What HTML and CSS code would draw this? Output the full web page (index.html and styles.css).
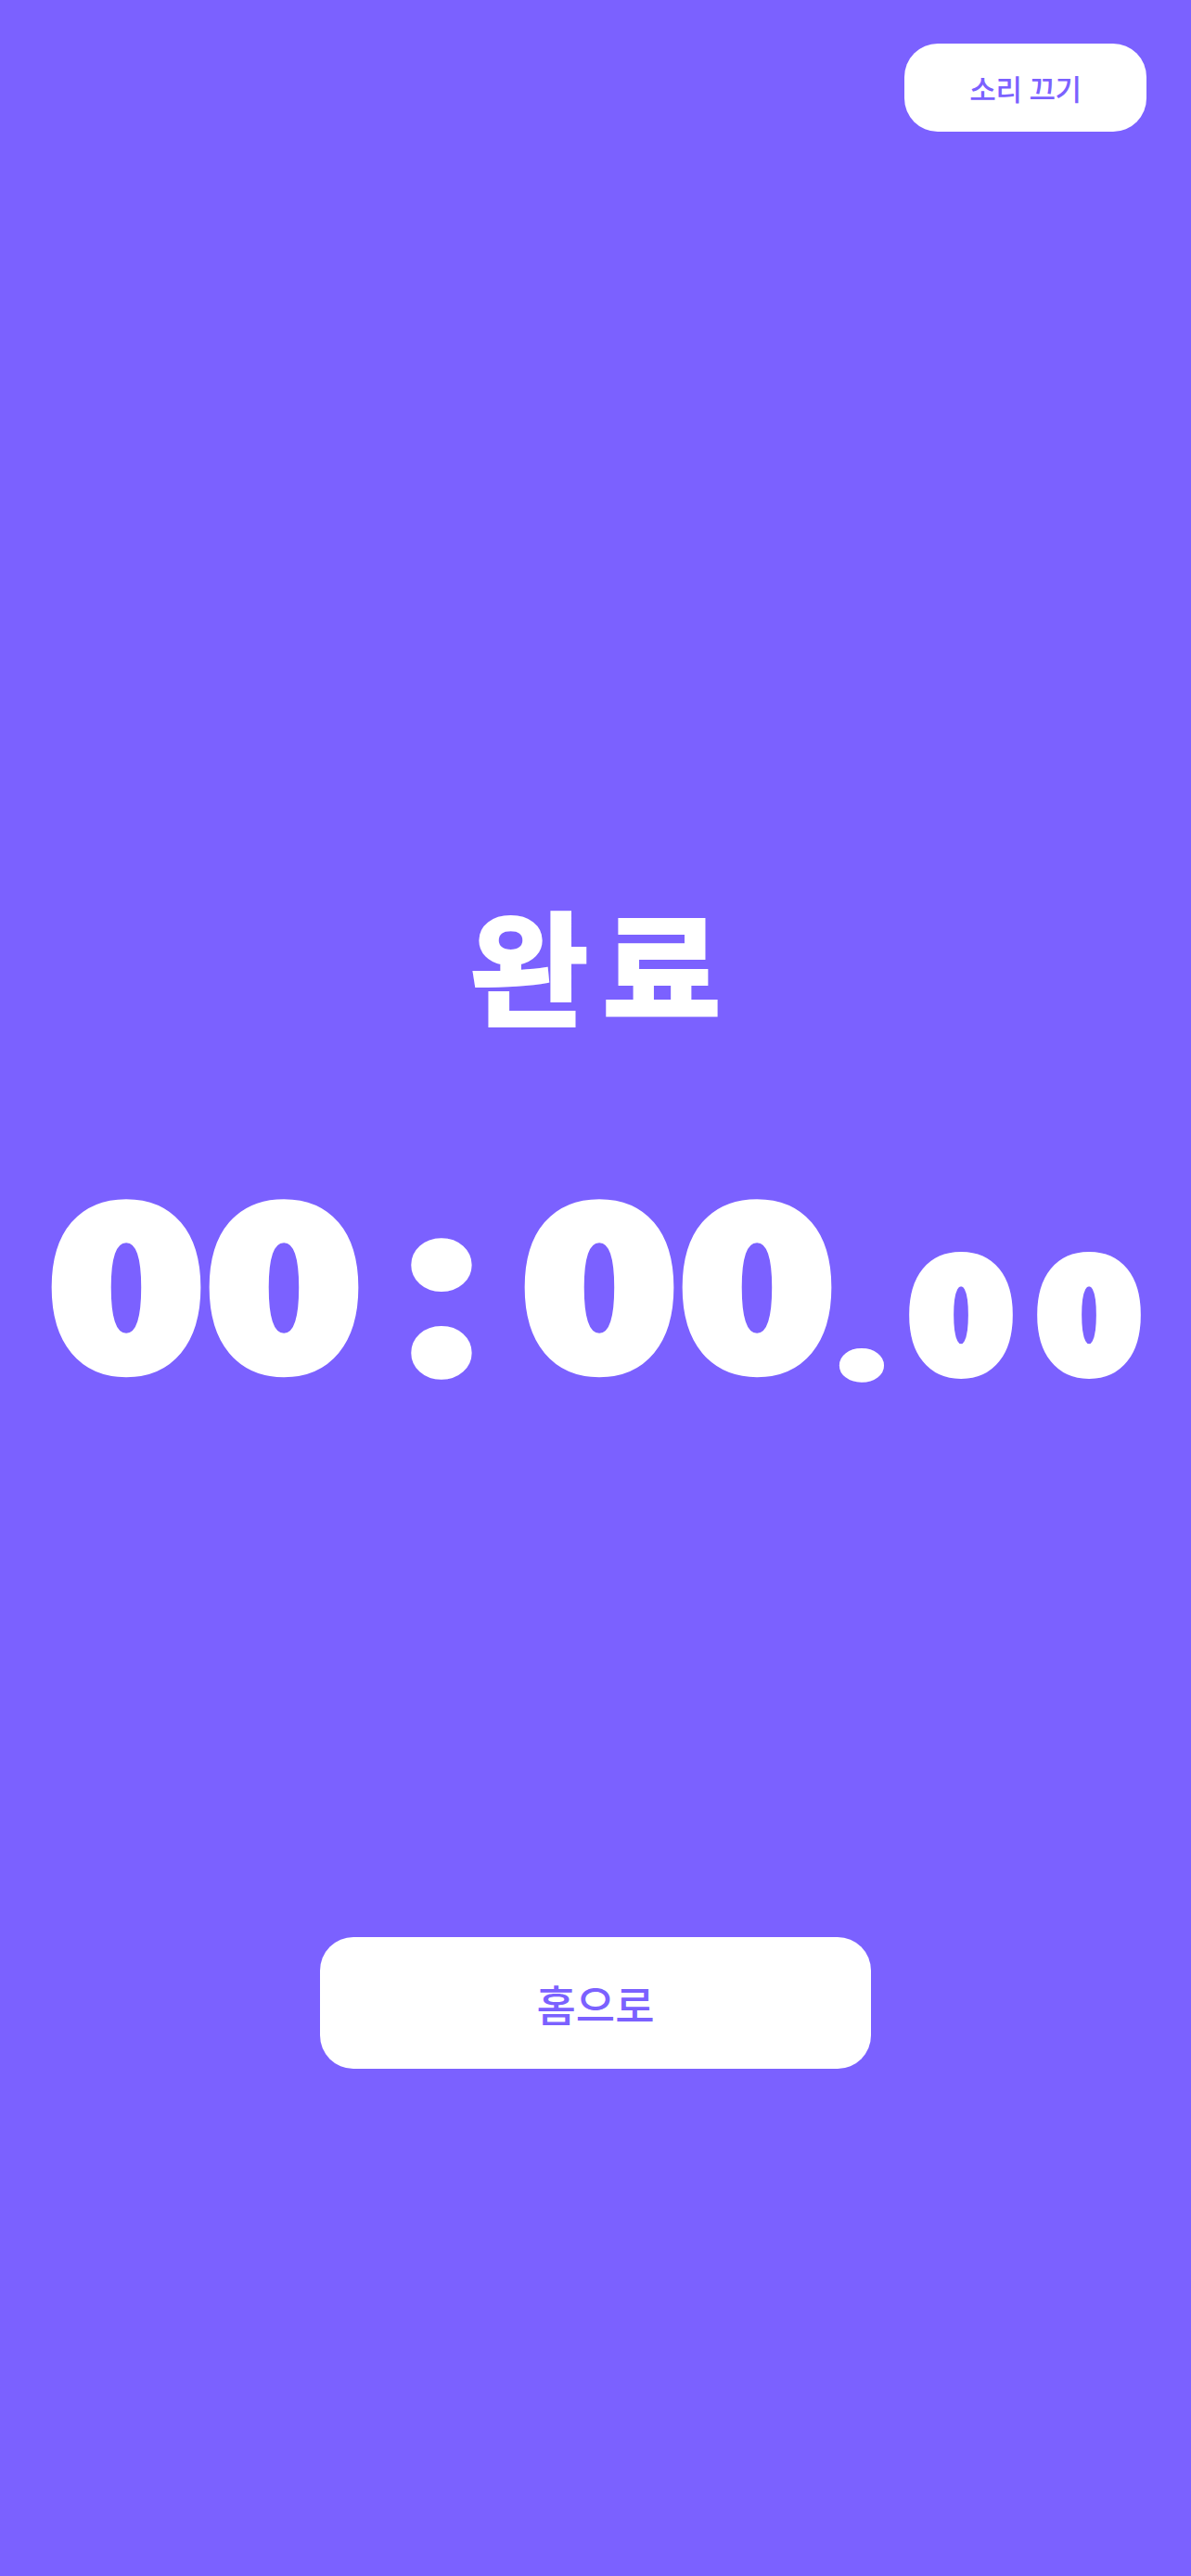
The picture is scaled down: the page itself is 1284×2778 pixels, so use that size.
FILE: index.html
```html
<!DOCTYPE html>
<html lang="ko">
<head>
<meta charset="utf-8">
<title>완료</title>
<link rel="stylesheet" href="styles.css">
</head>
<body>
  <div class="screen">
    <header class="topbar">
      <button class="mute-btn">소리 끄기</button>
    </header>
    <main class="content">
      <h1 class="title">완료</h1>
      <div class="time">
        <span class="big">0</span><span class="big">0</span><span class="colon">:</span><span class="big">0</span><span class="big">0</span><span class="dot">.</span><span class="small">0</span><span class="small">0</span>
      </div>
      <button class="home-btn">홈으로</button>
    </main>
  </div>
</body>
</html>
```

FILE: styles.css
```css
html, body {
  margin: 0;
  padding: 0;
}
body {
  background: #7b61ff;
  font-family: "Noto Sans CJK KR", "Noto Sans", sans-serif;
  color: #ffffff;
}
.screen {
  min-height: 2778px;
  display: flex;
  flex-direction: column;
}
.topbar {
  display: flex;
  justify-content: flex-end;
  padding: 47px 48px 0;
}
.mute-btn {
  width: 261px;
  height: 95px;
  border: none;
  border-radius: 36px;
  background: #ffffff;
  color: #7b61ff;
  font-family: "Noto Sans CJK KR", sans-serif;
  font-size: 31px;
  font-weight: 500;
  padding: 0;
  letter-spacing: -0.5px;
}
.content {
  display: flex;
  flex-direction: column;
  align-items: center;
}
.title {
  margin: 826px 0 0;
  font-size: 133px;
  line-height: 140px;
  font-weight: 700;
  -webkit-text-stroke: 4px #ffffff;
  letter-spacing: 15px;
  text-indent: 15px;
  transform: scaleX(1.04);
}
.time {
  margin-top: 153px;
  padding-left: 10px;
  display: flex;
  align-items: baseline;
  justify-content: center;
  font-weight: 900;
}
.time span {
  display: block;
  text-align: center;
  line-height: 1;
}
.big {
  width: 170px;
  font-size: 228px;
  -webkit-text-stroke: 16px #ffffff;
  transform: scaleX(1.18);
}
.colon {
  width: 170px;
  font-size: 189px;
  -webkit-text-stroke: 16px #ffffff;
  transform: translateY(14px) scaleX(1.16);
}
.dot {
  width: 66px;
  font-size: 130px;
  -webkit-text-stroke: 8px #ffffff;
  transform: translate(-5px, 8px) scaleX(1.35);
}
.small {
  width: 138px;
  font-size: 157px;
  -webkit-text-stroke: 16px #ffffff;
  transform: translateY(3px) scaleX(1.13);
}
.home-btn {
  margin-top: 600px;
  width: 594px;
  height: 142px;
  border: none;
  border-radius: 36px;
  background: #ffffff;
  color: #7b61ff;
  font-family: "Noto Sans CJK KR", sans-serif;
  font-size: 46px;
  font-weight: 500;
  padding: 0;
}
```
